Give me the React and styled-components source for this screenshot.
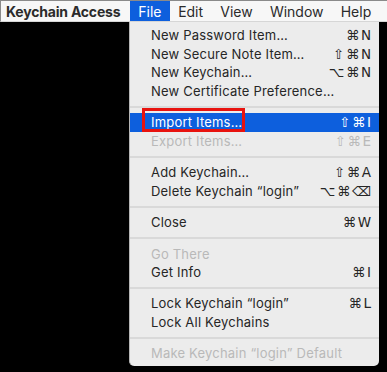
import React from "react";
import styled, { createGlobalStyle } from "styled-components";

const Global = createGlobalStyle`
  html, body {
    margin: 0;
    padding: 0;
    background: #000000;
  }
  body {
    width: 387px;
    height: 372px;
    overflow: hidden;
    font-family: Inter, "Noto Sans", sans-serif;
  }
`;

const Screen = styled.div`
  width: 387px;
  height: 372px;
  background: #000000;
  display: flex;
  flex-direction: column;
`;

const MenuBar = styled.div`
  height: 22px;
  box-sizing: border-box;
  background: #f7f7f7;
  border-left: 1px solid #8a8a8a;
  border-top: 1px solid #8a8a8a;
  border-bottom: 1px solid #d6d6d6;
  display: flex;
  align-items: stretch;
  padding-left: 4px;
`;

const BarItem = styled.div`
  display: flex;
  align-items: center;
  padding: 0 ${({ $pad }) => ($pad === undefined ? 8.6 : $pad)}px;
  margin-left: ${({ $gap }) => $gap || 0}px;
  font-size: 14px;
  font-weight: ${({ $bold }) => ($bold ? 700 : 400)};
  color: ${({ $active }) => ($active ? "#ffffff" : "#2b2b2b")};
  background: ${({ $active }) => ($active ? "#0d5fdd" : "transparent")};
  letter-spacing: ${({ $bold }) => ($bold ? "-0.2px" : "0")};
`;

const Below = styled.div`
  flex: 1;
  display: flex;
  padding-left: 129px;
`;

const Menu = styled.div`
  width: 250px;
  height: 344px;
  box-sizing: border-box;
  background: #ececec;
  border-left: 1px solid #b5b5b5;
  border-radius: 0 0 5px 5px;
  padding-top: 3.6px;
  display: flex;
  flex-direction: column;
`;

const Row = styled.div`
  position: relative;
  height: 18.7px;
  flex-shrink: 0;
  display: flex;
  align-items: center;
  justify-content: space-between;
  padding: 0 8px 0 21px;
  font-size: 13px;
  letter-spacing: 0.2px;
  color: ${({ $disabled, $active }) =>
    $active ? "#ffffff" : $disabled ? "#b9b9b9" : "#262626"};
  background: ${({ $active }) => ($active ? "#0d5fdd" : "transparent")};
`;

const Label = styled.span`
  white-space: nowrap;
`;

const Keys = styled.span`
  font-family: "DejaVu Sans", sans-serif;
  font-size: 13.5px;
  letter-spacing: 1.5px;
  margin-right: -1.5px;
  white-space: nowrap;
`;

const Sep = styled.div`
  height: 12.6px;
  flex-shrink: 0;
  display: flex;
  align-items: center;
  &::after {
    content: "";
    flex: 1;
    height: 2px;
    background: #d9d9d9;
  }
`;

const Callout = styled.div`
  position: absolute;
  left: 12px;
  top: -5.3px;
  width: 103px;
  height: 24px;
  box-sizing: border-box;
  border: 3px solid #e8130f;
`;

const groups = [
  [
    { label: "New Password Item…", keys: "⌘N" },
    { label: "New Secure Note Item…", keys: "⇧⌘N" },
    { label: "New Keychain…", keys: "⌥⌘N" },
    { label: "New Certificate Preference…" },
  ],
  [
    { label: "Import Items…", keys: "⇧⌘I", active: true },
    { label: "Export Items…", keys: "⇧⌘E", disabled: true },
  ],
  [
    { label: "Add Keychain…", keys: "⇧⌘A" },
    { label: "Delete Keychain “login”", keys: "⌥⌘⌫" },
  ],
  [{ label: "Close", keys: "⌘W" }],
  [
    { label: "Go There", disabled: true },
    { label: "Get Info", keys: "⌘I" },
  ],
  [
    { label: "Lock Keychain “login”", keys: "⌘L" },
    { label: "Lock All Keychains" },
  ],
  [{ label: "Make Keychain “login” Default", disabled: true }],
];

export default function App() {
  return (
    <>
      <Global />
      <Screen>
        <MenuBar>
          <BarItem $bold $pad={1}>Keychain Access</BarItem>
          <BarItem $pad={8} $gap={9} $active>
            File
          </BarItem>
          <BarItem>Edit</BarItem>
          <BarItem>View</BarItem>
          <BarItem>Window</BarItem>
          <BarItem>Help</BarItem>
        </MenuBar>
        <Below>
          <Menu>
            {groups.map((g, gi) => (
              <React.Fragment key={gi}>
                {gi > 0 && <Sep />}
                {g.map((it) => (
                  <Row key={it.label} $active={it.active} $disabled={it.disabled}>
                    <Label>{it.label}</Label>
                    {it.keys && <Keys>{it.keys}</Keys>}
                    {it.active && <Callout />}
                  </Row>
                ))}
              </React.Fragment>
            ))}
          </Menu>
        </Below>
      </Screen>
    </>
  );
}
